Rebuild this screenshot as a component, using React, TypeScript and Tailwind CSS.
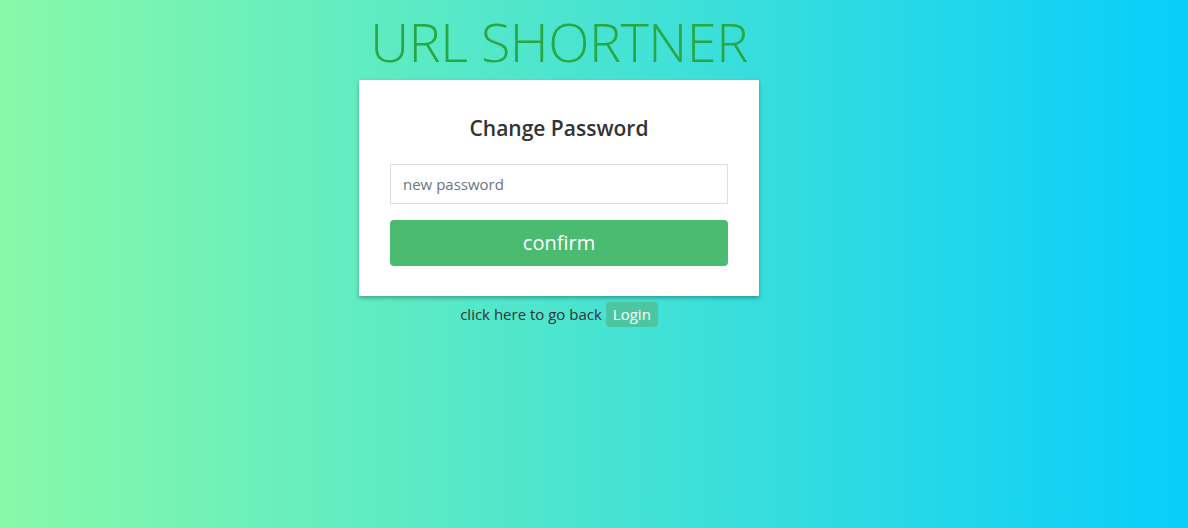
export default function App() {
  return (
    <div
      className="min-h-[528px] w-full bg-[linear-gradient(to_right,#88f9a8,#08cefb)]"
      style={{ fontFamily: '"Open Sans", "Noto Sans", sans-serif' }}
    >
      <div className="w-[1118px] flex flex-col items-center">
        <h1 className="mt-[6px] h-[74px] text-[54px] leading-[70px] font-light text-[#28a745] tracking-[-0.5px]">
          URL SHORTNER
        </h1>
        <div className="w-[400px] bg-white shadow-[0_2px_4px_rgba(0,0,0,0.3)] px-[31px] pt-[33px] pb-[30px]">
          <h2 className="text-center text-[21px] leading-[30px] font-semibold text-[#333]">
            Change Password
          </h2>
          <input
            type="password"
            placeholder="new password"
            className="mt-[21px] block w-full h-[40px] border border-[#ddd] px-[12px] text-[15px] text-[#333] placeholder:text-[#6c757d] outline-none"
          />
          <button className="mt-[16px] w-full h-[46px] rounded-[4px] bg-[#4bbb72] text-white text-[20px]">
            confirm
          </button>
        </div>
        <div className="mt-[6px] flex items-center gap-[4px] text-[15px] text-[#333]">
          <span>click here to go back</span>
          <a className="rounded-[4px] bg-[#4cc6a0] px-[7px] h-[25px] leading-[25px] text-white">Login</a>
        </div>
      </div>
    </div>
  );
}
